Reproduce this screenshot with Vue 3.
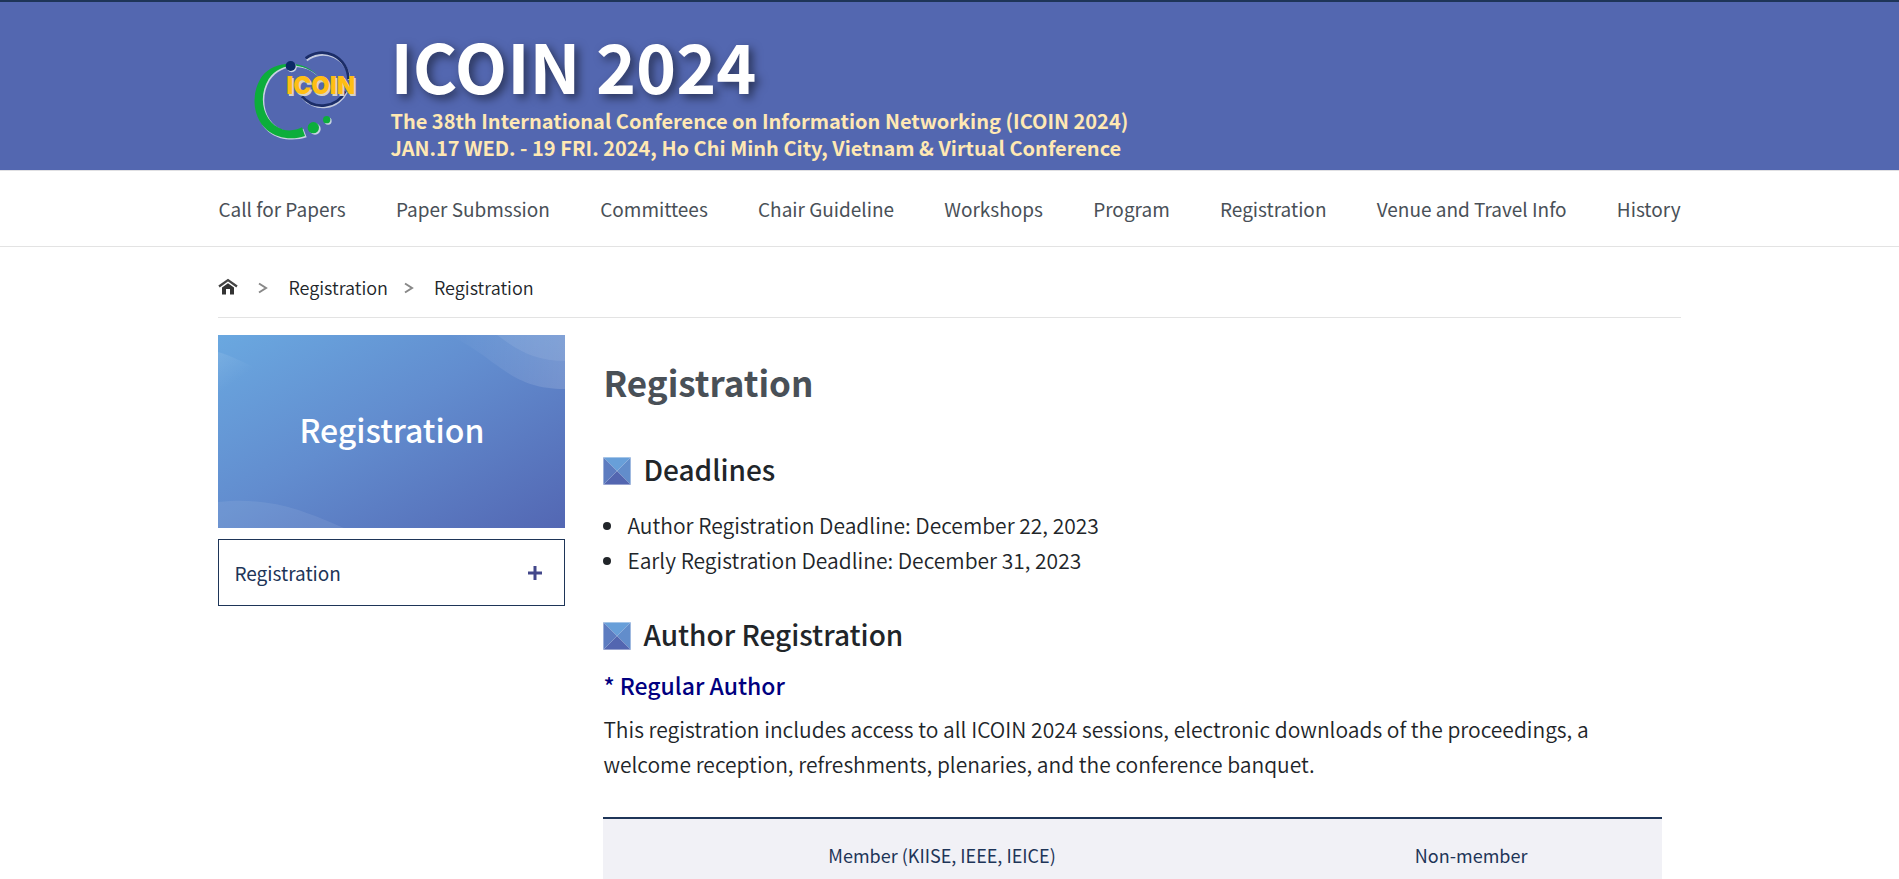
<script setup>
const navItems = [
  'Call for Papers',
  'Paper Submssion',
  'Committees',
  'Chair Guideline',
  'Workshops',
  'Program',
  'Registration',
  'Venue and Travel Info',
  'History',
]
const deadlines = [
  'Author Registration Deadline: December 22, 2023',
  'Early Registration Deadline: December 31, 2023',
]
</script>

<template>
  <div class="page">
    <header class="banner">
      <div class="container banner-inner">
        <a href="#" class="logo" aria-label="ICOIN home">
          <svg viewBox="0 0 420 330" aria-hidden="true">
            <g fill="none" stroke-linecap="butt">
              <path d="M200 61 A79 79 0 0 1 328 120 M320 156 A79 79 0 0 1 188 173" stroke="#c3cadf" stroke-width="7" />
              <path d="M197 55 A79 79 0 0 1 325 117 M316 154 A79 79 0 0 1 186 169" stroke="#1b2d68" stroke-width="8" />
            </g>
            <path d="M237 112 C195 68 125 70 90 120 C55 178 75 255 135 272 C155 277 176 274 190 266 L200 292 C165 303 120 303 85 275 C40 235 35 160 70 112 C110 62 190 62 237 112 Z" fill="#c9d3e3" />
            <path d="M233 107 C190 66 122 66 86 117 C50 176 72 251 130 269 C150 274 171 270 186 262 L195 288 C160 300 115 298 81 270 C35 230 33 157 66 109 C106 59 192 60 233 107 Z" fill="#0cae3b" />
            <g fill="#c9d3e3">
              <circle cx="155" cy="82" r="15" />
              <circle cx="225" cy="267" r="17" />
              <circle cx="264" cy="243" r="11" />
            </g>
            <circle cx="152" cy="78" r="15" fill="#0c2a66" />
            <circle cx="220" cy="263" r="17" fill="#0cae3b" />
            <circle cx="260" cy="239" r="11" fill="#0cae3b" />
            <text x="143" y="167" class="logo-text logo-text-shade">ICOIN</text>
            <text x="139" y="163" class="logo-text">ICOIN</text>
          </svg>
        </a>
        <div class="titles">
          <p class="site-title">ICOIN 2024</p>
          <p class="site-sub">The 38th International Conference on Information Networking (ICOIN 2024)</p>
          <p class="site-sub">JAN.17 WED. - 19 FRI. 2024, Ho Chi Minh City, Vietnam &amp; Virtual Conference</p>
        </div>
      </div>
    </header>

    <nav class="main-nav" aria-label="Main">
      <ul class="container nav-list">
        <li v-for="item in navItems" :key="item"><a href="#">{{ item }}</a></li>
      </ul>
    </nav>

    <div class="container">
      <nav class="crumbs" aria-label="Breadcrumb">
        <a href="#" class="home" aria-label="Home">
          <svg viewBox="0 0 20 17" aria-hidden="true">
            <path d="M1 8.500 L10 2 L19 8.500" fill="none" stroke="#444" stroke-width="2.200" />
            <path d="M4 9.500 L10 5.200 L16 9.500 V16.500 H12 V11 H8 V16.500 H4 Z" fill="#333" />
          </svg>
        </a>
        <svg class="chevron" viewBox="0 0 10 12" aria-hidden="true"><path d="M1 1.500 L8 6 L1 10.500" /></svg>
        <a href="#">Registration</a>
        <svg class="chevron chevron-near" viewBox="0 0 10 12" aria-hidden="true"><path d="M1 1.500 L8 6 L1 10.500" /></svg>
        <a href="#">Registration</a>
      </nav>

      <div class="columns">
        <aside class="side">
          <div class="side-banner">
            <svg class="waves" viewBox="0 0 347 193" preserveAspectRatio="none" aria-hidden="true">
              <defs>
                <linearGradient id="waveTop" x1="0" x2="1">
                  <stop offset="0" stop-color="#fff" stop-opacity="0" />
                  <stop offset="1" stop-color="#fff" stop-opacity="0.150" />
                </linearGradient>
                <linearGradient id="waveLeft" x1="0" y1="0" x2="0.800" y2="1">
                  <stop offset="0" stop-color="#fff" stop-opacity="0.100" />
                  <stop offset="0.600" stop-color="#fff" stop-opacity="0" />
                </linearGradient>
              </defs>
              <path d="M230 0 C280 22 290 54 347 54 V0 Z" fill="url(#waveTop)" />
              <path d="M279 0 C300 16 318 26 347 26 V0 Z" fill="#fff" fill-opacity="0.080" />
              <path d="M0 17 C20 23 32 32 48 36 L0 60 Z" fill="url(#waveLeft)" />
              <path d="M0 167 C50 162 80 173 126 193 H0 Z" fill="#fff" fill-opacity="0.080" />
            </svg>
            <h2>Registration</h2>
          </div>
          <button type="button" class="side-menu">
            <span>Registration</span>
            <svg viewBox="0 0 14 14" aria-hidden="true"><path d="M7 0 V14 M0 7 H14" /></svg>
          </button>
        </aside>

        <main class="content">
          <h1>Registration</h1>

          <h2 class="section-title">
            <svg viewBox="0 0 28 28" aria-hidden="true">
              <path d="M0 0 H28 L14 14 Z" fill="#689fd9" />
              <path d="M28 0 V28 L14 14 Z" fill="#628dcb" />
              <path d="M0 28 H28 L14 14 Z" fill="#5366b0" />
              <path d="M0 0 V28 L14 14 Z" fill="#5d7cc0" />
              <rect x="0.500" y="0.500" width="27" height="27" fill="none" stroke="#fff" stroke-opacity="0.400" />
            </svg>
            Deadlines
          </h2>
          <ul class="deadlines">
            <li v-for="line in deadlines" :key="line">{{ line }}</li>
          </ul>

          <h2 class="section-title">
            <svg viewBox="0 0 28 28" aria-hidden="true">
              <path d="M0 0 H28 L14 14 Z" fill="#689fd9" />
              <path d="M28 0 V28 L14 14 Z" fill="#628dcb" />
              <path d="M0 28 H28 L14 14 Z" fill="#5366b0" />
              <path d="M0 0 V28 L14 14 Z" fill="#5d7cc0" />
              <rect x="0.500" y="0.500" width="27" height="27" fill="none" stroke="#fff" stroke-opacity="0.400" />
            </svg>
            Author Registration
          </h2>
          <h3>* Regular Author</h3>
          <p class="intro">
            This registration includes access to all ICOIN 2024 sessions, electronic downloads of the proceedings, a
            welcome reception, refreshments, plenaries, and the conference banquet.
          </p>
          <table class="fees">
            <thead>
              <tr>
                <th class="col-member" scope="col">Member (KIISE, IEEE, IEICE)</th>
                <th scope="col">Non-member</th>
              </tr>
            </thead>
          </table>
        </main>
      </div>
    </div>
  </div>
</template>

<style>
html,
body {
  margin: 0;
  background: #fff;
}
body {
  overflow: hidden;
}
</style>

<style scoped>
.page {
  height: 100vh;
  overflow: hidden;
  font-family: 'Noto Sans CJK KR', 'Noto Sans', sans-serif;
  font-weight: 350;
  color: #212529;
}
.page * {
  box-sizing: border-box;
}
a {
  color: inherit;
  text-decoration: none;
}
h1,
h2,
h3,
p,
ul {
  margin: 0;
  padding: 0;
}
ul {
  list-style: none;
}
.container {
  width: 77%;
  max-width: 1600px;
  margin: 0 auto;
}
.banner {
  background: #5367b0;
  border-top: 2px solid #1e3558;
  border-bottom: 1px solid #e0e0e3;
}
.banner-inner {
  display: flex;
  padding: 26px 0 9px;
}
.logo {
  width: 140px;
  margin: 12px 10px 0 22px;
}
.logo svg {
  display: block;
  width: 140px;
  height: 110px;
}
.logo-text {
  font-family: Inter, sans-serif;
  font-weight: 900;
  font-size: 72px;
  fill: #ffbe14;
}
.logo-text-shade {
  fill: #d5d3c4;
}
.site-title {
  margin-bottom: 5px;
  font-size: 68px;
  line-height: 74px;
  font-weight: 700;
  color: #fff;
  text-shadow: 4px 4px 10px rgba(0, 0, 0, 0.5);
}
.site-sub {
  font-size: 20px;
  line-height: 27px;
  font-weight: 700;
  color: #ffe8b3;
}
.main-nav {
  border-bottom: 1px solid #e3e3e3;
}
.nav-list {
  display: flex;
  justify-content: space-between;
  padding: 24px 0 23px;
  font-size: 19px;
  line-height: 28px;
  font-weight: 400;
  color: #495057;
  white-space: nowrap;
}
.crumbs {
  display: flex;
  align-items: center;
  padding: 31px 0 22px;
  border-bottom: 1px solid #e3e3e3;
  font-size: 18px;
  line-height: 14px;
}
.home svg {
  display: block;
  width: 20px;
  height: 17px;
}
.chevron {
  width: 10px;
  height: 12px;
  margin: 3px 20px 0;
  fill: none;
  stroke: #888;
  stroke-width: 2;
}
.chevron-near {
  margin-left: 16px;
}
.columns {
  display: flex;
  align-items: flex-start;
  gap: 38px;
  padding-top: 17px;
}
.side {
  flex: 0 0 347px;
}
.side-banner {
  position: relative;
  display: flex;
  align-items: center;
  justify-content: center;
  height: 193px;
  padding-bottom: 5px;
  background: linear-gradient(150deg, #6aa8e0 0%, #628dcf 45%, #5367b3 100%);
}
.waves {
  position: absolute;
  inset: 0;
  width: 100%;
  height: 100%;
}
.side-banner h2 {
  position: relative;
  font-size: 32px;
  line-height: 48px;
  font-weight: 500;
  color: #fff;
}
.side-menu {
  display: flex;
  align-items: center;
  justify-content: space-between;
  width: 100%;
  margin-top: 11px;
  padding: 15px 22px 15px 15px;
  border: 1px solid #1e3558;
  background: #fff;
  font: inherit;
  font-size: 19px;
  line-height: 35px;
  font-weight: 400;
  color: #1e3558;
}
.side-menu svg {
  width: 14px;
  height: 14px;
  stroke: #42478a;
  stroke-width: 3;
}
.content {
  flex: 1;
  min-width: 0;
  padding: 20px 19px 0 0;
}
h1 {
  font-size: 35px;
  line-height: 54px;
  font-weight: 700;
  color: #495057;
}
.section-title {
  display: flex;
  align-items: center;
  gap: 12px;
  margin-top: 40px;
  font-size: 28px;
  line-height: 40px;
  font-weight: 500;
}
.section-title svg {
  width: 28px;
  height: 28px;
  margin-top: 4px;
}
.deadlines {
  margin-top: 19px;
  font-size: 21px;
  line-height: 35px;
}
.deadlines li {
  display: flex;
  align-items: center;
  gap: 16px;
}
.deadlines li::before {
  content: '';
  width: 8px;
  height: 8px;
  border-radius: 50%;
  background: #212529;
}
.deadlines + .section-title {
  margin-top: 36px;
}
h3 {
  margin-top: 13px;
  font-size: 23px;
  line-height: 36px;
  font-weight: 500;
  color: #000080;
}
.intro {
  margin-top: 9px;
  font-size: 21px;
  line-height: 35px;
}
.fees {
  width: 100%;
  margin-top: 35px;
  border-collapse: collapse;
  border-top: 2px solid #1e3558;
  background: #f1f1f6;
}
.fees th {
  padding: 22px 0 26px;
  font-size: 18px;
  line-height: 28px;
  font-weight: 400;
  color: #1e3558;
}
.col-member {
  width: 64%;
}
</style>
